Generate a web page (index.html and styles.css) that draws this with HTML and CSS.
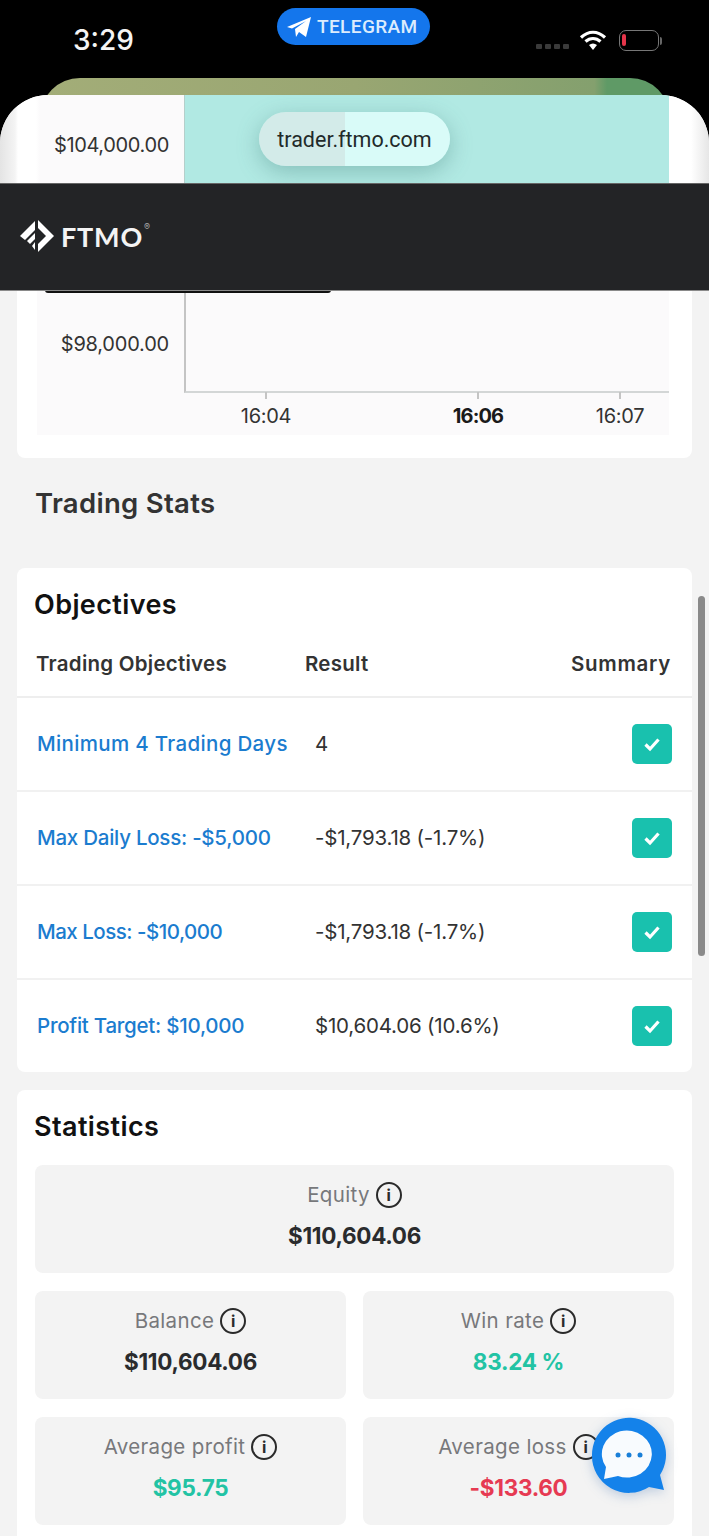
FILE: index.html
```html
<!DOCTYPE html>
<html lang="en">
<head>
<meta charset="utf-8">
<title>FTMO Trading Stats</title>
<link rel="stylesheet" href="styles.css">
</head>
<body>
<div class="page">
  <div class="status">
    <span class="clock">3:29</span>
    <div class="status-icons">
      <div class="cell-dots"><i></i><i></i><i></i><i></i></div>
      <svg class="wifi" width="28" height="22" viewBox="0 0 28 22"><path d="M2 8.500C9.500 1.500 18.500 1.500 26 8.500" fill="none" stroke="#fff" stroke-width="3.200"/><path d="M6.500 12.500C11 8.500 17 8.500 21.500 12.500" fill="none" stroke="#fff" stroke-width="3.200"/><path d="M10 16C12.500 14 15.500 14 18 16L14 21Z" fill="#fff"/></svg>
      <div class="battery"><div class="battery-level"></div></div>
      <div class="battery-cap"></div>
    </div>
  </div>
  <a class="telegram">
    <svg width="26" height="22" viewBox="0 0 26 22"><path d="M1 11 25 1 20 21 13 16 10 21 9 13 20 5 6 12.500Z" fill="#fff"/></svg>
    <span>TELEGRAM</span>
  </a>
  <div class="peek"></div>
  <div class="sheet">
    <div class="sheet-label"><span>$104,000.00</span></div>
    <div class="sheet-zone"></div>
    <div class="sheet-gutter"></div>
  </div>
  <div class="url-pill"><span>trader.ftmo.com</span></div>

  <header class="topbar">
    <svg class="logo" width="36" height="34" viewBox="0 0 36 34"><path d="M19 1 35 17 19 33 19 25 27 17 19 9Z" fill="#fff"/><path d="M16 2 1 17 6 21 16 11Z" fill="#fff"/><path d="M16 14 8 22 11 25 16 20Z" fill="#fff"/><path d="M16 23 13 27 16 31Z" fill="#fff"/></svg>
    <span class="wordmark">FTMO</span><span class="reg">®</span>
  </header>

  <main class="content">
    <section class="card chart-card">
      <div class="chart">
        <div class="tooltip-edge"></div>
        <div class="plot-row">
          <div class="y-label"><span>$98,000.00</span></div>
          <div class="plot"></div>
        </div>
        <div class="x-axis">
          <div class="tick t1"><i></i><span>16:04</span></div>
          <div class="tick t2"><i></i><b>16:06</b></div>
          <div class="tick t3"><i></i><span>16:07</span></div>
        </div>
      </div>
    </section>

    <h2 class="section-title">Trading Stats</h2>

    <section class="card objectives">
      <h3 class="card-title">Objectives</h3>
      <div class="obj-head">
        <span class="c1">Trading Objectives</span>
        <span class="c2">Result</span>
        <span class="c3">Summary</span>
      </div>
      <div class="obj-row"><a class="obj-link">Minimum 4 Trading Days</a><span class="obj-val">4</span><span class="check"><svg width="18" height="16" viewBox="0 0 18 16"><path d="M2.500 8.500 7 13 15.500 3.500" fill="none" stroke="#fff" stroke-width="3.200"/></svg></span></div>
      <div class="obj-row"><a class="obj-link tight">Max Daily Loss: -$5,000</a><span class="obj-val">-$1,793.18 (-1.7%)</span><span class="check"><svg width="18" height="16" viewBox="0 0 18 16"><path d="M2.500 8.500 7 13 15.500 3.500" fill="none" stroke="#fff" stroke-width="3.200"/></svg></span></div>
      <div class="obj-row"><a class="obj-link tighter">Max Loss: -$10,000</a><span class="obj-val">-$1,793.18 (-1.7%)</span><span class="check"><svg width="18" height="16" viewBox="0 0 18 16"><path d="M2.500 8.500 7 13 15.500 3.500" fill="none" stroke="#fff" stroke-width="3.200"/></svg></span></div>
      <div class="obj-row"><a class="obj-link tight">Profit Target: $10,000</a><span class="obj-val">$10,604.06 (10.6%)</span><span class="check"><svg width="18" height="16" viewBox="0 0 18 16"><path d="M2.500 8.500 7 13 15.500 3.500" fill="none" stroke="#fff" stroke-width="3.200"/></svg></span></div>
    </section>

    <section class="card statistics">
      <h3 class="card-title">Statistics</h3>
      <div class="stat-grid">
        <div class="tile wide">
          <div class="tile-label">Equity <span class="info">i</span></div>
          <div class="tile-value">$110,604.06</div>
        </div>
        <div class="tile">
          <div class="tile-label">Balance <span class="info">i</span></div>
          <div class="tile-value">$110,604.06</div>
        </div>
        <div class="tile">
          <div class="tile-label">Win rate <span class="info">i</span></div>
          <div class="tile-value green">83.24 %</div>
        </div>
        <div class="tile">
          <div class="tile-label">Average profit <span class="info">i</span></div>
          <div class="tile-value green">$95.75</div>
        </div>
        <div class="tile">
          <div class="tile-label">Average loss <span class="info">i</span></div>
          <div class="tile-value red">-$133.60</div>
        </div>
      </div>
    </section>
  </main>

  <div class="scrollbar"></div>
  <svg class="chat" width="80" height="80" viewBox="0 0 80 80"><path d="M3 39a37 37 0 1 1 68 20l4 15-15-3A37 37 0 0 1 3 39Z" fill="#1482ea"/><path d="M17 51A25 23.500 0 1 1 29 60L15 63Z" fill="#f8fbfe"/><circle cx="29" cy="39" r="2.500" fill="#1a7fd8"/><circle cx="40" cy="39" r="2.500" fill="#1a7fd8"/><circle cx="51" cy="39" r="2.500" fill="#1a7fd8"/></svg>
</div>
</body>
</html>
```
FILE: styles.css
```css
* { box-sizing: border-box; }
html, body { margin: 0; padding: 0; }
body { width: 709px; height: 1536px; overflow: hidden; background: #000; font-family: Inter, "Liberation Sans", sans-serif; color: #232426; }
.page { position: relative; width: 709px; height: 1536px; overflow: hidden; display: flex; flex-direction: column; }

.status { height: 95px; flex: none; background: #000; display: flex; justify-content: space-between; padding: 21px 47px 0 73px; }
.clock { font-family: Inter, sans-serif; font-size: 28px; line-height: 38px; font-weight: 500; color: #f4f4f4; }
.status-icons { display: flex; align-items: flex-start; padding-top: 8px; }
.cell-dots { display: flex; gap: 3px; margin: 15px 10px 0 0; }
.cell-dots i { width: 6px; height: 5px; border-radius: 1px; background: #3a3a3a; }
.wifi { margin-right: 12px; }
.battery { width: 40px; height: 21px; margin-top: 1px; border: 1.500px solid #777; border-radius: 7px; padding: 3px 0 0 2px; }
.battery-level { width: 4px; height: 12px; background: #e5354a; border-radius: 2px; }
.battery-cap { width: 2px; height: 8px; margin: 8px 0 0 1px; background: #666; border-radius: 0 2px 2px 0; }

.telegram { position: absolute; left: 277px; top: 8px; width: 153px; height: 37px; border-radius: 19px; background: #1476ec; display: flex; align-items: center; gap: 5px; padding-left: 9px; color: #dcecfd; }
.telegram span { font-family: Roboto, sans-serif; font-size: 19px; font-weight: 500; letter-spacing: 0.4px; }

.peek { position: absolute; left: 40px; top: 78px; width: 630px; height: 50px; border-radius: 40px 40px 0 0; background: linear-gradient(90deg, #a3ad78 0%, #99a672 50%, #84a06e 88%, #5f9a66 90%, #5f9a66 100%); }

.sheet { position: relative; height: 89px; flex: none; display: flex; border-radius: 48px 48px 0 0; overflow: hidden; background: #fff; }
.sheet-label { width: 185px; flex: none; background: linear-gradient(90deg, #e4e4e4 0, #f4f4f4 15px, #fff 18px, #fff 36px, #fbfafb 40px); border-right: 1px solid #b5cfcb; padding: 37px 15px 0 0; text-align: right; font-size: 20px; line-height: 26px; color: #333; }
.sheet-label span { letter-spacing: -0.35px; }
.sheet-zone { width: 484px; flex: none; background: #b1e9e3; }
.sheet-gutter { flex: 1; background: linear-gradient(90deg, #fff 0, #fff 55%, #e6e6e6 100%); }

.url-pill { position: absolute; left: 259px; top: 112px; width: 191px; height: 54px; border-radius: 27px; background: linear-gradient(90deg, #d3ebe9 0, #d3ebe9 86px, #d9fbf8 86px, #d9fbf8 100%); box-shadow: 0 6px 22px rgba(70, 130, 125, 0.4); display: flex; align-items: center; justify-content: center; }
.url-pill span { font-family: Roboto, sans-serif; font-size: 21.500px; color: #1f2a2a; }

.topbar { height: 106px; flex: none; position: relative; z-index: 1; background: #232426; box-shadow: 0 -1px 0 #666, 0 1px 0 #8a8a8a; display: flex; align-items: center; padding: 0 0 2px 19px; color: #f4f4f4; }
.logo { margin-right: 6px; }
.wordmark { font-family: Lato, sans-serif; font-size: 27px; font-weight: 700; letter-spacing: 0.8px; }
.reg { font-size: 9px; align-self: flex-start; margin: 37px 0 0 1px; color: #aaa; }

.content { flex: 1; background: #f3f3f3; padding: 0 17px; display: flex; flex-direction: column; }
.card { background: #fff; border-radius: 8px; }
.chart-card { height: 168px; flex: none; border-radius: 0 0 8px 8px; padding: 0 23px 0 20px; }
.chart { height: 145px; background: #fbfafb; display: flex; flex-direction: column; position: relative; }
.tooltip-edge { position: absolute; left: 8px; top: 0; width: 286px; height: 3px; background: #111; border-radius: 0 0 4px 4px; }
.plot-row { height: 103px; display: flex; flex: none; }
.y-label { width: 147px; flex: none; padding: 41px 15px 0 0; text-align: right; font-size: 20px; line-height: 26px; color: #333; letter-spacing: -0.2px; }
.plot { flex: 1; border-left: 2px solid #c4c4c4; border-bottom: 2px solid #d3d6d6; }
.x-axis { display: flex; position: relative; flex: 1; }
.tick { position: absolute; top: -1px; width: 70px; display: flex; flex-direction: column; align-items: center; font-size: 20px; letter-spacing: -0.3px; color: #333; }
.tick i { width: 1.500px; height: 7px; background: #c4c4c4; margin-bottom: 4px; }
.tick span, .tick b { line-height: 26px; }
.tick b { font-weight: 700; color: #1a1a1a; letter-spacing: -0.9px; }
.t1 { left: 194px; }
.t2 { left: 406px; }
.t3 { left: 548px; }

.section-title { margin: 0; height: 110px; flex: none; padding: 27px 0 0 18px; font-size: 27.500px; line-height: 36px; font-weight: 600; color: #333; letter-spacing: 0.3px; }
.card-title { margin: 0; font-size: 27px; line-height: 36px; font-weight: 600; color: #111; letter-spacing: 0.4px; padding: 19px 0 0 17px; height: 65px; }

.objectives { height: 504px; flex: none; display: flex; flex-direction: column; }
.obj-head { height: 65px; flex: none; display: flex; align-items: center; padding: 0 21px 3px 19px; border-bottom: 2px solid #eee; font-size: 20.500px; font-weight: 600; color: #333; letter-spacing: 0.25px; }
.c1 { width: 269px; }
.c2 { flex: 1; }
.c3 { letter-spacing: 0.7px; }
.obj-row { height: 94px; flex: none; display: flex; align-items: center; padding: 0 20px; border-bottom: 2px solid #f1f1f1; font-size: 20.500px; }
.obj-row:last-child { border-bottom: 0; height: 92px; }
.obj-link { width: 278px; flex: none; margin-top: -2px; color: #1b7ccf; font-weight: 500; letter-spacing: 0.33px; }
.obj-link.tight { letter-spacing: -0.25px; }
.obj-link.tighter { letter-spacing: -0.5px; }
.obj-val { flex: 1; margin-top: -2px; color: #333; letter-spacing: -0.2px; }
.check { width: 40px; height: 40px; flex: none; border-radius: 5px; background: #19c1ae; display: flex; align-items: center; justify-content: center; }

.statistics { flex: none; margin-top: 18px; height: 470px; }
.stat-grid { display: grid; grid-template-columns: 311px 311px; gap: 18px 17px; padding: 10px 18px 0; }
.tile { height: 108px; background: #f3f3f3; border-radius: 8px; display: flex; flex-direction: column; align-items: center; padding-top: 15px; }
.tile.wide { grid-column: 1 / 3; }
.tile-label { display: flex; align-items: center; gap: 6px; font-size: 20.500px; line-height: 30px; color: #77787b; letter-spacing: 0.35px; }
.tile-value { margin-top: 11px; font-size: 22.500px; line-height: 30px; font-weight: 700; color: #2a2b2d; letter-spacing: -0.3px; }
.green { color: #22c3a4; }
.red { color: #e63a52; }
.info { width: 26px; height: 26px; border: 2px solid #2a2a2a; border-radius: 50%; display: flex; align-items: center; justify-content: center; font-size: 16px; font-weight: 700; color: #2a2a2a; }

.scrollbar { position: absolute; left: 698px; top: 596px; width: 7px; height: 360px; border-radius: 4px; background: #8a8a8a; }
.chat { position: absolute; left: 589px; top: 1416px; filter: drop-shadow(0 3px 6px rgba(20, 80, 160, 0.25)); }
```
